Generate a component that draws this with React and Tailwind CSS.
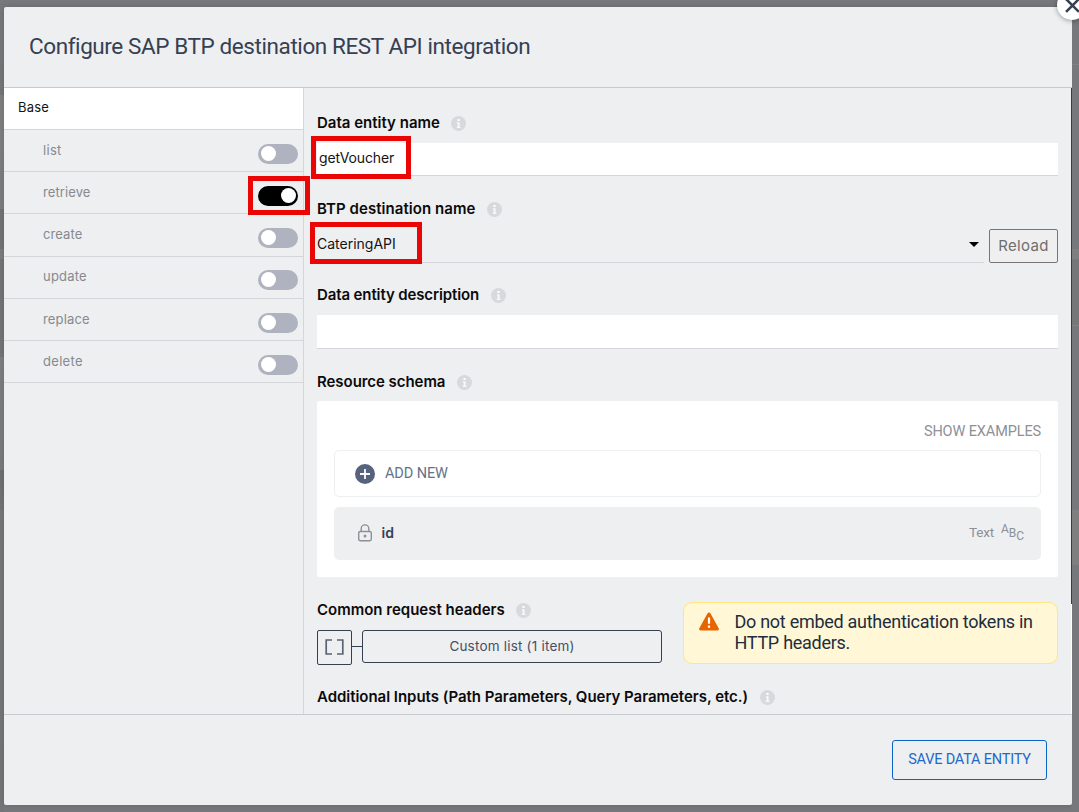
import React from "react";

function Info() {
  return (
    <svg className="mt-px size-[15px] shrink-0" viewBox="0 0 15 15">
      <circle cx="7.5" cy="7.5" r="7.5" fill="#d7d9dd" />
      <rect x="6.5" y="3" width="2.1" height="2" fill="#fff" />
      <path d="M5.9 6.2h2.7v4.6h.9v1.2H5.7v-1.2h.9V7.4h-.7z" fill="#f7f8f9" />
    </svg>
  );
}

function Label({ children, className }) {
  return (
    <div className="flex h-5 items-center gap-[11.5px] whitespace-nowrap text-[15px] leading-5 font-semibold text-[#0b0b0c]">
      <span className={className}>{children}</span>
      <Info />
    </div>
  );
}

function Toggle({ on }) {
  return (
    <span className={`mt-1 flex h-5 w-10 shrink-0 items-start rounded-full pt-[2px] ${on ? "justify-end bg-black pr-[2px]" : "justify-start bg-[#aeb3bf] pl-[3px]"}`}>
      <span className="size-[15px] rounded-full bg-white" />
    </span>
  );
}

const rows = [
  { name: "list", h: "h-[42px] pt-[10px]", cls: "tracking-[0.3px]" },
  { name: "retrieve", h: "h-[42px] pt-[10px]", cls: "tracking-[0.1px]", on: true },
  { name: "create", h: "h-[43px] pt-[10px]", cls: "tracking-[0.1px]" },
  { name: "update", h: "h-[42px] pt-[9px]", cls: "tracking-[0.2px]" },
  { name: "replace", h: "h-[42px] pt-[10px]", cls: "tracking-[0.15px]" },
  { name: "delete", h: "h-[42px] pt-[10px]", cls: "tracking-[0.3px]" },
];

export default function App() {
  return (
    <div className="relative flex h-[812px] w-[1079px] bg-[#77787b] overflow-hidden font-['Inter','Liberation_Sans',sans-serif]">
      <div className="h-full w-1 shrink-0 bg-[linear-gradient(#77787b_64px,#767677_64px,#767677_95px,#808081_95px,#7d7d7e_209px,#737374_209px,#737374_249px,#7c7c7d_249px,#7c7c7d_259px,#757576_259px,#757576_357px,#7f7f80_357px,#7a7a7b_470px,#6f6f70_470px,#747475_510px,#777778_510px,#747577_812px)]" />
      <div className="mt-[7px] flex h-[798px] w-[1068px] shrink-0 flex-col rounded-[2px] bg-[#eeeff1] shadow-[0_0_6px_rgba(0,0,0,0.15)]">
        <header className="flex h-[81px] items-center border-b border-[#c9cacd] pb-[2px] pl-[25px]">
          <h1 className="font-['Roboto',sans-serif] text-[22.5px] leading-[30px] tracking-[-0.41px] whitespace-nowrap text-[#354052]">Configure SAP BTP destination REST API integration</h1>
        </header>

        <div className="flex h-[626px]">
          <aside className="w-[300px] border-r border-[#d5d6d9]">
            <div className="flex h-[42px] items-center border-b border-[#d5d6d9] bg-white pb-[2px] pl-[14px] text-[13px] text-[#131416]">
              <span className="tracking-[0.2px]">Base</span>
            </div>
            {rows.map((r) => (
              <div key={r.name} className={`flex items-start justify-between border-b border-[#d5d6d9] pr-[5px] pl-[39px] ${r.h}`}>
                <span className={`text-[13px] leading-5 text-[#868990] ${r.cls}`}>{r.name}</span>
                <Toggle on={r.on} />
              </div>
            ))}
          </aside>

          <main className="flex w-[767px] flex-col px-[13px] pt-[25px]">
            <Label>Data entity name</Label>
            <div className="mt-[10px] flex h-[33px] items-center border-b border-[#d5d6d9] bg-white pb-[3px] pl-[2px] text-[14px] text-[#131416]">
              <span className="tracking-[-0.15px]">getVoucher</span>
            </div>
            <div className="mt-[23px]"><Label className="tracking-[0.05px]">BTP destination name</Label></div>
            <div className="mt-[10px] flex h-[34px] justify-between">
              <div className="flex w-[667px] items-center justify-between border-b border-[#d5d6d9] pr-[5px] pb-[5px] text-[14px] text-[#131416]">
                <span>CateringAPI</span>
                <svg className="mt-[3px] h-[5px] w-[10px]" viewBox="0 0 10 5"><path d="M0 0h10L5 5z" fill="#000" /></svg>
              </div>
              <button className="flex w-[69px] items-center justify-center rounded-[2px] border border-[#767676] bg-[#efefef] text-[15px] tracking-[0.3px] text-[#6e6e6e]">Reload</button>
            </div>
            <div className="mt-[22px]"><Label className="tracking-[-0.12px]">Data entity description</Label></div>
            <div className="mt-[10px] h-[34px] border-b border-[#d5d6d9] bg-white" />
            <div className="mt-[23px]"><Label className="tracking-[-0.05px]">Resource schema</Label></div>

            <section className="mt-[9px] flex h-[176px] flex-col rounded-[2px] bg-white px-[17px]">
              <div className="mt-[21px] flex h-5 items-center justify-end font-['Roboto',sans-serif] text-[14.5px] tracking-[-0.12px] text-[#8d9097]"><span>SHOW EXAMPLES</span></div>
              <div className="mt-[8px] flex h-[47px] items-center rounded-[5px] border border-[#eeeff1] pl-5 font-['Roboto',sans-serif] text-[14.5px] tracking-[-0.1px] text-[#64718a]">
                <svg className="mr-[10px] size-5" viewBox="0 0 20 20">
                  <circle cx="10" cy="10" r="10" fill="#56637c" />
                  <path d="M10 5v10M5 10h10" stroke="#fff" strokeWidth="1.8" />
                </svg>
                <span className="mt-px">ADD NEW</span>
              </div>
              <div className="mt-[10px] flex h-[53px] items-center rounded-[5px] bg-[#eeeff1] pr-[17px] pl-6">
                <svg className="-mt-[2px] mr-[9px] h-[18px] w-[14px]" viewBox="0 0 14 18" fill="none" stroke="#8d9097" strokeWidth="1.4">
                  <rect x="0.7" y="7.5" width="12.6" height="9.2" rx="1.6" />
                  <path d="M3.2 7.5V4.7a3.8 3.8 0 0 1 7.6 0V7.5" />
                  <circle cx="7" cy="12.1" r="1.5" fill="#8d9097" stroke="none" />
                </svg>
                <span className="-mt-[2px] pl-[0.5px] text-[14px] font-semibold text-[#354052]">id</span>
                <span className="-mt-[2px] ml-auto font-['Roboto',sans-serif] text-[13.5px] tracking-[-0.2px] text-[#8d9097]">Text</span>
                <span className="-mt-[3px] ml-[7px] flex h-4 w-[23px] justify-between font-['Roboto',sans-serif] text-[12px] leading-[10px] text-[#8d9097]">
                  <span>A</span><span className="mt-[4px]">B</span><span className="mt-[7px]">C</span>
                </span>
              </div>
            </section>

            <div className="flex justify-between">
              <div className="mt-[23px] w-[345px]">
                <Label>Common request headers</Label>
                <div className="mt-[10px] flex">
                  <div className="flex size-[35px] items-center justify-center rounded-[2px] border border-[#354052] pb-[2px]">
                    <svg className="h-4 w-[19px]" viewBox="0 0 19 16" fill="none" stroke="#5a6475" strokeWidth="1.7">
                      <path d="M7 1H1.2v14H7M12 1h5.8v14H12" />
                    </svg>
                  </div>
                  <div className="mt-4 h-px w-[10px] bg-[#354052]" />
                  <button className="flex h-[33px] w-[300px] items-center justify-center rounded-[3px] border border-[#354052] text-[13.5px] tracking-[0.2px] text-[#465064]"><span>Custom list (1 item)</span></button>
                </div>
              </div>
              <div className="mt-[25px] flex h-[62px] w-[375px] rounded-[9px] border border-[#ffe680] bg-[#fff7d6] pt-2 pl-[15px]">
                <svg className="mt-px h-[19px] w-[20px] shrink-0" viewBox="0 0 20 19">
                  <path d="M8.6 1.3a1.6 1.6 0 0 1 2.8 0l8.3 14.9A1.5 1.5 0 0 1 18.4 18.4H1.6A1.5 1.5 0 0 1 .3 16.2z" fill="#e76500" />
                  <path d="M10 5.5v6.2M10 13.5v2.3" stroke="#fff" strokeWidth="2.2" />
                </svg>
                <p className="ml-[15.5px] text-[18px] leading-[21px] tracking-[-0.28px] text-[#1d2d3e] font-['Roboto',sans-serif]">
                  <span className="whitespace-nowrap">Do not embed authentication tokens in</span><br />HTTP headers.
                </p>
              </div>
            </div>
            <div className="mt-[22px]"><Label className="tracking-[-0.03px]">Additional Inputs (Path Parameters, Query Parameters, etc.)</Label></div>
          </main>
          <div className="w-px bg-white"><div className="h-[516px] w-px bg-[#323c4c]" /></div>
        </div>

        <footer className="flex flex-1 justify-end border-t border-[#c9cacd] pt-[25px] pr-[25px]">
          <button className="flex h-10 w-[155px] items-center justify-center rounded-[3px] border border-[#0a64c8] font-['Roboto',sans-serif] text-[14.5px] tracking-[-0.2px] text-[#1f69c8]"><span>SAVE DATA ENTITY</span></button>
        </footer>
      </div>
      <div className="h-full flex-1 bg-[linear-gradient(#77787b_64px,#808184_64px,#808184_65px,#77787b_65px,#77787b_249px,#7f7f80_249px,#7f7f80_259px,#767779_259px,#767779_325px,#808184_325px,#808184_326px,#77787b_326px,#77787b_510px,#7f7f7f_510px,#7f7f7f_565px,#77787b_565px)]" />

      <div className="absolute top-[136px] left-[311px] h-[43px] w-[100px] border-[5px] border-[#eb0606]" />
      <div className="absolute top-[176px] left-[248px] h-[39px] w-[62px] border-[5px] border-[#eb0606]" />
      <div className="absolute top-[222px] left-[310px] h-[42px] w-[112px] border-[5px] border-[#eb0606]" />
      <button className="absolute -top-[10px] left-[1057px] flex size-[30px] items-center justify-center rounded-full bg-white shadow-[0_1px_5px_rgba(0,0,0,0.35)]">
        <svg className="size-[15px]" viewBox="0 0 14 14"><path d="M1 1l12 12M13 1L1 13" stroke="#354052" strokeWidth="2.4" /></svg>
      </button>
    </div>
  );
}
